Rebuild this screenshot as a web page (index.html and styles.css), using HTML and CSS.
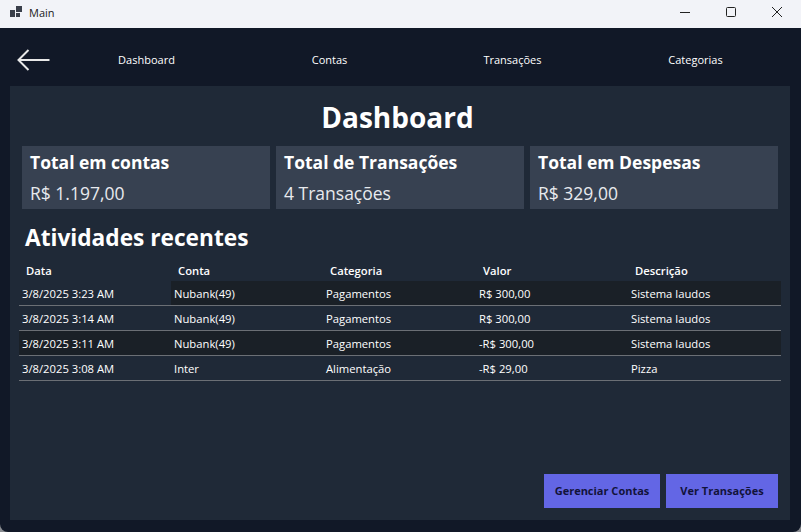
FILE: index.html
```html
<!DOCTYPE html>
<html lang="en">
<head>
    <meta charset="UTF-8">
    <meta name="viewport" content="width=device-width, initial-scale=1.0">
    <title>Main</title>
    <link rel="stylesheet" href="styles.css">
</head>
<body>

    <div class="titlebar">
        <svg class="app-icon" width="12" height="11" viewBox="0 0 12 11">
            <rect x="0" y="4" width="5" height="7" fill="#3a3f4a"/>
            <rect x="6" y="0" width="6" height="6" fill="#3a3f4a"/>
            <rect x="6" y="7" width="4" height="4" fill="#3a3f4a"/>
        </svg>
        <span class="title">Main</span>
        <div class="win-buttons">
            <svg class="win-btn" width="46" height="24" viewBox="0 0 46 24"><path d="M18 12.500h10" stroke="#222" fill="none"/></svg>
            <svg class="win-btn" width="46" height="24" viewBox="0 0 46 24"><rect x="18.500" y="7.500" width="9" height="9" rx="1" stroke="#222" fill="none"/></svg>
            <svg class="win-btn" width="46" height="24" viewBox="0 0 46 24"><path d="M18 7l10 10M28 7l-10 10" stroke="#222" fill="none"/></svg>
        </div>
    </div>

    <div class="window">
        <nav class="nav">
            <svg class="back" width="34" height="24" viewBox="0 0 34 24">
                <path d="M32.500 12H2M11.500 2L1.500 12L11.500 22" stroke="#e8e8e8" stroke-width="2" fill="none"/>
            </svg>
            <a class="nav-link">Dashboard</a>
            <a class="nav-link">Contas</a>
            <a class="nav-link">Transações</a>
            <a class="nav-link">Categorias</a>
        </nav>

        <main class="panel">
            <h1>Dashboard</h1>

            <div class="cards">
                <div class="card">
                    <div class="card-title">Total em contas</div>
                    <div class="card-value">R$ 1.197,00</div>
                </div>
                <div class="card">
                    <div class="card-title">Total de Transações</div>
                    <div class="card-value">4 Transações</div>
                </div>
                <div class="card">
                    <div class="card-title">Total em Despesas</div>
                    <div class="card-value">R$ 329,00</div>
                </div>
            </div>

            <h2>Atividades recentes</h2>

            <div class="table">
                <div class="row head">
                    <div>Data</div><div>Conta</div><div>Categoria</div><div>Valor</div><div>Descrição</div>
                </div>
                <div class="row">
                    <div>3/8/2025 3:23 AM</div><div class="dark">Nubank(49)</div><div class="dark">Pagamentos</div><div class="dark">R$ 300,00</div><div class="dark">Sistema laudos</div>
                </div>
                <div class="row">
                    <div>3/8/2025 3:14 AM</div><div>Nubank(49)</div><div>Pagamentos</div><div>R$ 300,00</div><div>Sistema laudos</div>
                </div>
                <div class="row">
                    <div class="dark">3/8/2025 3:11 AM</div><div class="dark">Nubank(49)</div><div class="dark">Pagamentos</div><div class="dark">-R$ 300,00</div><div class="dark">Sistema laudos</div>
                </div>
                <div class="row">
                    <div>3/8/2025 3:08 AM</div><div>Inter</div><div>Alimentação</div><div>-R$ 29,00</div><div>Pizza</div>
                </div>
            </div>

            <div class="actions">
                <button class="btn btn-contas">Gerenciar Contas</button>
                <button class="btn btn-trans">Ver Transações</button>
            </div>
        </main>
    </div>

</body>
</html>
```

FILE: styles.css
```css
html, body {
    margin: 0;
    height: 532px;
    overflow: hidden;
}
html {
    background-color: #8a8d92;
}
body {
    font-family: "Open Sans", "Noto Sans", sans-serif;
    color: #fff;
}

.titlebar {
    display: flex;
    align-items: center;
    height: 28px;
    background-color: #f2f3f8;
    color: #1a1a1a;
    font-size: 11px;
}
.app-icon {
    margin-left: 10px;
    margin-bottom: 5px;
}
.title {
    margin-left: 7px;
    margin-bottom: 3px;
}
.win-buttons {
    display: flex;
    margin-left: auto;
    margin-right: 1px;
    margin-bottom: 5px;
}

.window {
    display: flex;
    flex-direction: column;
    height: 504px;
    background-color: #111827;
    border-radius: 0 0 8px 8px;
}

.nav {
    display: grid;
    grid-template-columns: 55px repeat(4, 183px);
    align-items: center;
    height: 58px;
    box-sizing: border-box;
    padding-top: 5px;
    font-size: 11px;
}
.back {
    margin-left: 17px;
}
.nav-link {
    text-align: center;
}

.panel {
    display: flex;
    flex-direction: column;
    height: 434px;
    margin: 0 11px 0 10px;
    background-color: #1f2937;
    box-sizing: border-box;
    padding: 13px 9px 12px;
}

h1 {
    margin: 0;
    padding-right: 5px;
    font-size: 28px;
    line-height: 37px;
    font-weight: 700;
    text-align: center;
}

.cards {
    display: grid;
    grid-template-columns: repeat(3, 248px);
    gap: 6px;
    margin: 10px 0 0 3px;
}
.card {
    height: 63px;
    background-color: #374151;
    padding: 0 8px;
    box-sizing: border-box;
}
.card-title {
    font-size: 17.500px;
    font-weight: 700;
    line-height: 23px;
    margin-top: 5px;
}
.card-value {
    font-size: 17.500px;
    line-height: 24px;
    margin-top: 7px;
    color: #e8eaee;
}

h2 {
    margin: 14px 0 0 6px;
    font-size: 22.700px;
    line-height: 30px;
    font-weight: 700;
}

.table {
    margin-top: 9px;
    width: 762px;
    font-size: 11.250px;
}
.row {
    display: grid;
    grid-template-columns: 152px 152px 153px 152px 153px;
    height: 25px;
    border-bottom: 1px solid #6b6f75;
    box-sizing: border-box;
}
.row > div {
    padding: 1px 0 0 3px;
    line-height: 23px;
}
.row > .dark {
    background-color: #1a2027;
}
.head {
    height: 19px;
    border-bottom: 0;
    font-weight: 600;
}
.row.head > div {
    padding: 0 0 2px 7px;
    line-height: 17px;
}

.actions {
    display: flex;
    justify-content: flex-end;
    gap: 6px;
    margin-top: auto;
    margin-right: 3px;
}
.btn {
    height: 34px;
    border: 0;
    padding: 0 0 2px;
    background-color: #6366e5;
    color: #12133a;
    font-family: inherit;
    font-size: 11px;
    font-weight: 700;
}
.btn-contas { width: 116px; }
.btn-trans { width: 112px; }
```
